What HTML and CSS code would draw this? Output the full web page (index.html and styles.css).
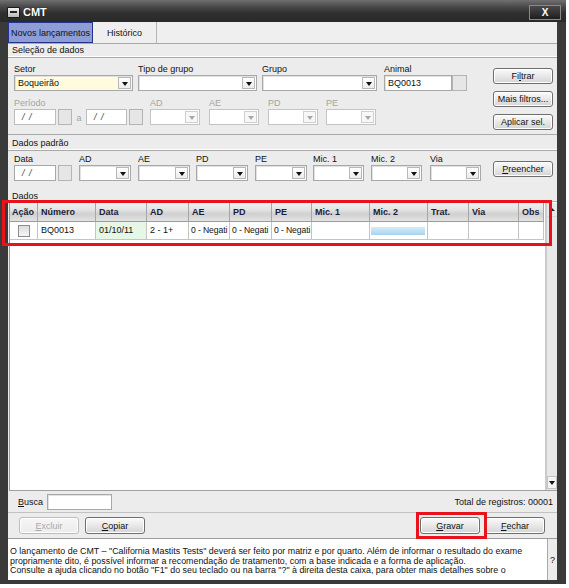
FILE: index.html
```html
<!DOCTYPE html>
<html lang="pt">
<head>
<meta charset="utf-8">
<title>CMT</title>
<link rel="stylesheet" href="styles.css">
</head>
<body>
<div class="window">
  <div class="titlebar">
    <span class="sysicon"><span class="bar"></span></span>
    <span class="title">CMT</span>
    <span class="close">X</span>
  </div>
  <div class="content">
    <div class="tabs">
      <div class="tab active">Novos lançamentos</div>
      <div class="tab">Histórico</div>
    </div>

    <div class="sechead h14">Seleção de dados</div>
    <div class="panel1">
      <div class="fields">
        <div class="row">
          <div class="field w119 mr5">
            <div class="lbl">Setor</div>
            <div class="combo yellow"><span class="val">Boqueirão</span><span class="dd"><i class="tri"></i></span></div>
          </div>
          <div class="field w119 mr5">
            <div class="lbl">Tipo de grupo</div>
            <div class="combo"><span class="val"></span><span class="dd"><i class="tri"></i></span></div>
          </div>
          <div class="field w115 mr7">
            <div class="lbl">Grupo</div>
            <div class="combo"><span class="val"></span><span class="dd"><i class="tri"></i></span></div>
          </div>
          <div class="field">
            <div class="lbl">Animal</div>
            <div class="inrow">
              <div class="text w68">BQ0013</div>
              <div class="sqbtn w15"></div>
            </div>
          </div>
        </div>
        <div class="row mt6">
          <div class="field mr7">
            <div class="lbl dis">Período</div>
            <div class="inrow">
              <div class="date w42 dis"><span>/ /</span></div>
              <div class="sqbtn w14 ml2"></div>
              <span class="a-sep">a</span>
              <div class="date w41 dis"><span>/ /</span></div>
              <div class="sqbtn w14 ml2"></div>
            </div>
          </div>
          <div class="field w50 mr9">
            <div class="lbl dis">AD</div>
            <div class="combo disabled"><span class="val"></span><span class="dd"><i class="tri"></i></span></div>
          </div>
          <div class="field w50 mr9">
            <div class="lbl dis">AE</div>
            <div class="combo disabled"><span class="val"></span><span class="dd"><i class="tri"></i></span></div>
          </div>
          <div class="field w50 mr8">
            <div class="lbl dis">PD</div>
            <div class="combo disabled"><span class="val"></span><span class="dd"><i class="tri"></i></span></div>
          </div>
          <div class="field w50">
            <div class="lbl dis">PE</div>
            <div class="combo disabled"><span class="val"></span><span class="dd"><i class="tri"></i></span></div>
          </div>
        </div>
      </div>
      <div class="btncol">
        <div class="btn">Fi<u>l</u>trar</div>
        <div class="btn">Mais filtros...</div>
        <div class="btn">Aplicar sel.</div>
      </div>
    </div>

    <div class="sechead h16">Dados padrão</div>
    <div class="panel2">
      <div class="field mr7">
        <div class="lbl">Data</div>
        <div class="inrow">
          <div class="date w42"><span>/ /</span></div>
          <div class="sqbtn w14 ml2"></div>
        </div>
      </div>
      <div class="field w52 mr7"><div class="lbl">AD</div><div class="combo"><span class="val"></span><span class="dd"><i class="tri"></i></span></div></div>
      <div class="field w52 mr6"><div class="lbl">AE</div><div class="combo"><span class="val"></span><span class="dd"><i class="tri"></i></span></div></div>
      <div class="field w52 mr7"><div class="lbl">PD</div><div class="combo"><span class="val"></span><span class="dd"><i class="tri"></i></span></div></div>
      <div class="field w52 mr6"><div class="lbl">PE</div><div class="combo"><span class="val"></span><span class="dd"><i class="tri"></i></span></div></div>
      <div class="field w51 mr7"><div class="lbl">Mic. 1</div><div class="combo"><span class="val"></span><span class="dd"><i class="tri"></i></span></div></div>
      <div class="field w51 mr8"><div class="lbl">Mic. 2</div><div class="combo"><span class="val"></span><span class="dd"><i class="tri"></i></span></div></div>
      <div class="field w51"><div class="lbl">Via</div><div class="combo"><span class="val"></span><span class="dd"><i class="tri"></i></span></div></div>
      <div class="btn fill"><u>P</u>reencher</div>
    </div>

    <div class="sechead h16 dados">Dados</div>
    <div class="grid">
      <div class="table">
        <div class="hrow">
          <div class="hc c-acao">Ação</div>
          <div class="hc c-num">Número</div>
          <div class="hc c-data">Data</div>
          <div class="hc c-ad">AD</div>
          <div class="hc c-ae">AE</div>
          <div class="hc c-pd">PD</div>
          <div class="hc c-pe">PE</div>
          <div class="hc c-mic1">Mic. 1</div>
          <div class="hc c-mic2">Mic. 2</div>
          <div class="hc c-trat">Trat.</div>
          <div class="hc c-via">Via</div>
          <div class="hc c-obs">Obs</div>
        </div>
        <div class="drow">
          <div class="dc c-acao center"><span class="check"></span></div>
          <div class="dc c-num">BQ0013</div>
          <div class="dc c-data green">01/10/11</div>
          <div class="dc c-ad">2 - 1+</div>
          <div class="dc c-ae tight">0 - Negati</div>
          <div class="dc c-pd tight">0 - Negati</div>
          <div class="dc c-pe tight">0 - Negati</div>
          <div class="dc c-mic1"></div>
          <div class="dc c-mic2"><span class="selbar"></span></div>
          <div class="dc c-trat"></div>
          <div class="dc c-via"></div>
          <div class="dc c-obs"></div>
        </div>
      </div>
      <div class="vscroll">
        <div class="up"><i class="tri-up"></i></div>
        <div class="track"></div>
        <div class="down"><i class="tri"></i></div>
      </div>
    </div>

    <div class="busca">
      <span class="lbl-b"><u>B</u>usca</span>
      <div class="text w65"></div>
      <span class="total">Total de registros: 00001</span>
    </div>

    <div class="actions">
      <div class="btn w59 disabled"><u>E</u>xcluir</div>
      <div class="btn w59 ml6"><u>C</u>opiar</div>
      <div class="btn w60 mlauto"><u>G</u>ravar</div>
      <div class="btn w59 ml5"><u>F</u>echar</div>
    </div>

    <div class="help">
      <div class="helptext">
        <div class="hl">O lançamento de CMT – "California Mastits Tests" deverá ser feito por matriz e por quarto. Além de informar o resultado do exame</div>
        <div class="hl">propriamente dito, é possível informar a recomendação de tratamento, com a base indicada e a forma de aplicação.</div>
        <div class="hl">Consulte a ajuda clicando no botão "F1" do seu teclado ou na barra "?" à direita desta caixa, para obter mais detalhes sobre o</div>
      </div>
      <div class="qmark">?</div>
    </div>
  </div>
</div>
<div class="redbox grid-mark"></div>
<div class="redbox save-mark"></div>
</body>
</html>
```

FILE: styles.css
```css
* { box-sizing: border-box; }
body {
  margin: 0;
  background: #ffffff;
  font-family: "Liberation Sans", Arial, sans-serif;
  font-size: 9px;
  color: #111;
  position: relative;
}
.window {
  width: 566px;
  height: 584px;
  background: #3a3a3a;
  display: flex;
  flex-direction: column;
}
.titlebar {
  height: 22px;
  flex: none;
  display: flex;
  align-items: center;
  padding: 0 5px 0 7px;
  background: linear-gradient(#707070, #4a4a4a 30%, #2f2f2f 60%, #2a2a2a);
}
.sysicon {
  width: 13px;
  height: 11px;
  background: linear-gradient(#f0f0f0, #b8b8b8);
  border: 1px solid #1a1a1a;
  border-radius: 1px;
  display: flex;
  align-items: center;
  justify-content: center;
  margin-top: 2px;
}
.sysicon .bar { width: 7px; height: 2px; background: #222; }
.title {
  color: #fff;
  font-weight: bold;
  font-size: 11px;
  margin-left: 3px;
  margin-top: 2px;
  text-shadow: 0 0 1px #000;
}
.close {
  margin-left: auto;
  width: 32px;
  height: 15px;
  border: 1px solid #8a8a8a;
  background: linear-gradient(#4a4a4a, #1e1e1e);
  color: #fff;
  font-weight: bold;
  font-size: 10px;
  display: flex;
  align-items: center;
  justify-content: center;
  margin-top: 2px;
}
.content {
  flex: 1;
  margin: 0 9px 4px 8px;
  background: #ececec;
  display: flex;
  flex-direction: column;
  overflow: hidden;
}
.tabs {
  height: 22px;
  flex: none;
  display: flex;
  align-items: flex-end;
  border-bottom: 1px solid #a9a9a9;
  background: #efefef;
}
.tab {
  height: 21px;
  width: 64px;
  display: flex;
  align-items: center;
  justify-content: center;
  border-right: 1px solid #b4b4b4;
  font-size: 9px;
}
.tab.active {
  width: 85px;
  background: #8e9dd6;
  border: 1px solid #26338c;
}
.sechead {
  flex: none;
  padding-left: 4px;
  border-bottom: 1px solid #a9a9a9;
  box-shadow: inset 0 -1px 0 #fff;
  font-size: 9px;
}
.h14 { height: 14px; line-height: 13px; }
.h16 { height: 16px; line-height: 17px; }
.dados { line-height: 22px; border-bottom: none; box-shadow: none; }

.panel1 {
  height: 77px;
  flex: none;
  display: flex;
  padding: 5px 0 0 6px;
  border-bottom: 1px solid #a9a9a9;
}
.fields { display: flex; flex-direction: column; }
.row { display: flex; align-items: flex-end; }
.mt6 { margin-top: 6px; }
.field { display: flex; flex-direction: column; }
.lbl { height: 12px; line-height: 12px; font-size: 9px; white-space: nowrap; }
.lbl.dis { color: #a4a4a4; }
.inrow { display: flex; align-items: center; height: 16px; }
.w119 { width: 119px; }
.w115 { width: 115px; }
.w68 { width: 68px; }
.w65 { width: 65px; }
.w60 { width: 60px; }
.w59 { width: 59px; }
.w52 { width: 52px; }
.w51 { width: 51px; }
.w50 { width: 50px; }
.w42 { width: 42px; }
.w41 { width: 41px; }
.w15 { width: 15px; }
.w14 { width: 14px; }
.mr5 { margin-right: 5px; }
.mr6 { margin-right: 6px; }
.mr7 { margin-right: 7px; }
.mr8 { margin-right: 8px; }
.mr9 { margin-right: 9px; }
.ml2 { margin-left: 2px; }
.ml5 { margin-left: 5px; }
.ml6 { margin-left: 6px; }
.mlauto { margin-left: auto; }

.combo {
  height: 16px;
  border: 1px solid #a8a8a8;
  background: #fff;
  display: flex;
  align-items: stretch;
  box-shadow: inset 1px 1px 0 #e2e2e2;
}
.combo.yellow { background: #fffbdd; }
.combo .val {
  flex: 1;
  padding-left: 3px;
  line-height: 14px;
  white-space: nowrap;
  overflow: hidden;
}
.combo .dd {
  width: 13px;
  margin: 1px 1px 1px 0;
  border: 1px solid #b8b8b8;
  background: linear-gradient(#ffffff, #ececec);
  display: flex;
  align-items: center;
  justify-content: center;
}
.tri {
  width: 0;
  height: 0;
  border-left: 3.5px solid transparent;
  border-right: 3.5px solid transparent;
  border-top: 4px solid #111;
  margin-top: 1px;
}
.tri-up {
  width: 0;
  height: 0;
  border-left: 3px solid transparent;
  border-right: 3px solid transparent;
  border-bottom: 3px solid #222;
}
.combo.disabled { border-color: #c4c4c4; box-shadow: none; }
.combo.disabled .dd { border-color: #cfcfcf; background: #f7f7f7; }
.combo.disabled .tri { border-top-color: #a8a8a8; }

.text {
  height: 16px;
  border: 1px solid #a8a8a8;
  background: #fff;
  padding-left: 3px;
  line-height: 14px;
  box-shadow: inset 1px 1px 0 #e2e2e2;
}
.sqbtn {
  height: 16px;
  border: 1px solid #b4b4b4;
  background: #e6e6e6;
}
.date {
  height: 16px;
  border: 1px solid #a8a8a8;
  background: #fff;
  padding-left: 7px;
  line-height: 14px;
  color: #3a3a5a;
  font-style: italic;
  letter-spacing: 1px;
}
.date.dis { border-color: #bdbdbd; }
.a-sep { width: 14px; text-align: center; color: #a4a4a4; padding-top: 2px; }

.btncol {
  margin-left: auto;
  margin-right: 4px;
  padding-top: 5px;
  display: flex;
  flex-direction: column;
  gap: 7px;
}
.btn {
  width: 60px;
  height: 16px;
  border: 1px solid #6e6e6e;
  border-radius: 3px;
  background: linear-gradient(#fbfbfb, #e8e8e8 50%, #d4d4d4);
  box-shadow: inset 0 0 0 1px #ffffff;
  display: flex;
  align-items: center;
  justify-content: center;
  font-size: 9px;
  white-space: nowrap;
  color: #111;
}
.btn.disabled { border-color: #bcbcbc; color: #a9a9a9; background: linear-gradient(#f6f6f6, #ececec); }
.btn u { text-decoration: underline; }

.panel2 {
  height: 34px;
  flex: none;
  display: flex;
  align-items: flex-start;
  padding: 2px 0 0 6px;
}
.btn.fill { margin-left: auto; margin-right: 4px; margin-top: 8px; }

.grid {
  height: 290px;
  flex: none;
  margin-left: 1px;
  display: flex;
  background: #fff;
  border-left: 1px solid #9a9a9a;
  border-top: 1px solid #b0b0b0;
  border-bottom: 1px solid #a0a0a0;
  padding-top: 1px;
}
.table { flex: 1; }
.hrow, .drow { display: flex; }
.hrow { height: 19px; }
.drow { height: 18px; border-bottom: 1px solid #c4c4c4; width: 534px; }
.hc {
  height: 19px;
  border-right: 1px solid #a6a6a6;
  border-bottom: 1px solid #9c9c9c;
  background: linear-gradient(#f2f2f2, #e2e2e2 40%, #d0d0d0 60%, #e2e2e2);
  font-weight: bold;
  color: #1b1b3a;
  padding-left: 3px;
  line-height: 18px;
  white-space: nowrap;
  overflow: hidden;
}
.dc {
  height: 17px;
  border-right: 1px solid #c4c4c4;
  padding-left: 3px;
  line-height: 17px;
  white-space: nowrap;
  overflow: hidden;
}
.dc.tight { padding-left: 2px; font-size: 8.6px; letter-spacing: -0.1px; }
.dc.center { display: flex; align-items: center; justify-content: center; padding-left: 0; }
.dc.green { background: #e6f7e6; }
.check {
  width: 12px;
  height: 12px;
  border: 1px solid #8c8c8c;
  background: linear-gradient(#dcdcdc, #f6f6f6);
}
.selbar {
  display: block;
  height: 8px;
  margin: 5px 0 0 -2px;
  width: 54px;
  background: linear-gradient(#d4ebf8, #a9d3ee);
}
.c-acao { width: 28px; }
.c-num { width: 58px; }
.c-data { width: 51px; }
.c-ad { width: 42px; }
.c-ae { width: 41px; }
.c-pd { width: 42px; }
.c-pe { width: 40px; }
.c-mic1 { width: 58px; }
.c-mic2 { width: 58px; }
.c-trat { width: 41px; }
.c-via { width: 50px; }
.c-obs { width: 25px; }
.hc.c-acao { padding-left: 2px; }

.vscroll {
  width: 12px;
  display: flex;
  flex-direction: column;
  background: #e8e8e8;
  border-left: 2px solid #cbcbcb;
}
.vscroll .up {
  height: 14px;
  display: flex;
  align-items: center;
  justify-content: center;
  border-bottom: 1px solid #d8d8d8;
}
.vscroll .track { flex: 1; }
.vscroll .down {
  height: 13px;
  border: 1px solid #c2c2c2;
  background: #f4f4f4;
  display: flex;
  align-items: center;
  justify-content: center;
  margin-bottom: 1px;
}

.busca {
  height: 22px;
  flex: none;
  display: flex;
  align-items: center;
  padding: 1px 4px 0 10px;
  border-bottom: 1px solid #c2c2c2;
}
.lbl-b { width: 29px; }
.total { margin-left: auto; font-size: 9px; }

.actions {
  height: 25px;
  flex: none;
  display: flex;
  align-items: center;
  padding: 0 12px 0 11px;
}
.actions .btn { height: 17px; }

.help {
  height: 42px;
  flex: none;
  display: flex;
  border-top: 1px solid #9c9c9c;
}
.helptext {
  flex: 1;
  background: #fff;
  padding: 8px 0 0 2px;
  overflow: hidden;
}
.hl {
  font-size: 8.9px;
  line-height: 9.6px;
  white-space: nowrap;
}
.qmark {
  width: 10px;
  border-left: 1px solid #a8a8a8;
  display: flex;
  align-items: center;
  justify-content: center;
  font-size: 9px;
  background: #ececec;
}

.redbox {
  position: absolute;
  border: 3px solid #e8121b;
}
.grid-mark { left: 2px; top: 200px; width: 550px; height: 46px; }
.save-mark { left: 416px; top: 512px; width: 71px; height: 27px; }
```
